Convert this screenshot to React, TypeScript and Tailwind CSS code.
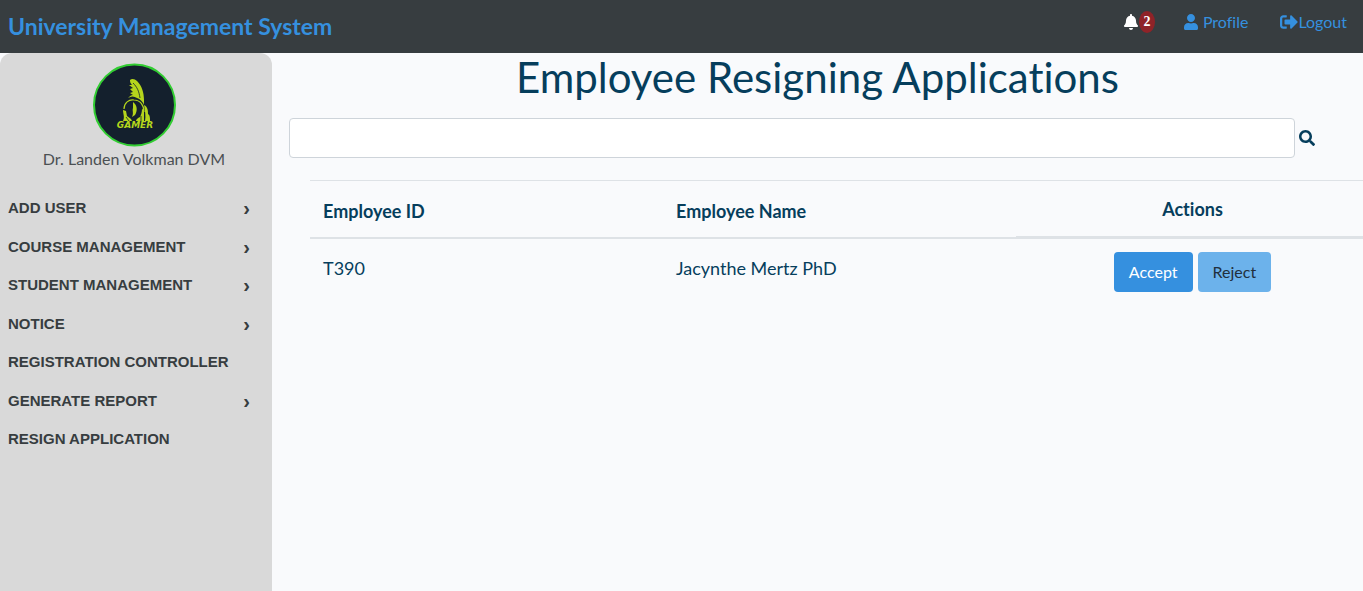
import React from "react";
import { FaBell, FaSearch, FaSignOutAlt, FaUser } from "react-icons/fa";

const menu: { label: string; expandable: boolean }[] = [
  { label: "ADD USER", expandable: true },
  { label: "COURSE MANAGEMENT", expandable: true },
  { label: "STUDENT MANAGEMENT", expandable: true },
  { label: "NOTICE", expandable: true },
  { label: "REGISTRATION CONTROLLER", expandable: false },
  { label: "GENERATE REPORT", expandable: true },
  { label: "RESIGN APPLICATION", expandable: false },
];

const employees = [{ id: "T390", name: "Jacynthe Mertz PhD" }];

function Avatar() {
  return (
    <svg
      viewBox="0 0 84 84"
      role="img"
      aria-label="Gamer avatar"
      className="size-[84px]"
    >
      <circle cx="42.5" cy="42" r="40.5" fill="#14202d" stroke="#32cd32" strokeWidth="2" />
      {/* hood */}
      <path
        d="M38 17c2-2 5-1 7 1 5 5 7 12 7 19v5c-1-3-4-6-7-7-3-2-6-2-9 0 2-2 3-3 5-3l-3-2 3-1-3-3 3-1-4-3h3c-2-2-2-4-2-5z"
        fill="#b5d51c"
      />
      <path d="M41 20c4 4 6 8 7 15" fill="none" stroke="#14202d" strokeWidth="0.8" />
      {/* head outline */}
      <path d="M32 46c0-6 5-10 10-9 6 0 10 5 10 12" fill="none" stroke="#b5d51c" strokeWidth="1.2" />
      <path d="M41 39c4 3 5 8 2 13l-3 2c2-4 0-6 1-9z" fill="#b5d51c" />
      {/* shoulders and hands */}
      <path d="M52 42c4 2 4 6 4 9 2 1 2 4 2 7h-5c1-5 0-10-1-16z" fill="#b5d51c" />
      <path
        d="M31 47l3 1 1 5 4 3 1 2h-9c2-4 0-7 0-11zM50 46l2 1v11h-8c0-2 2-3 4-4 1-2 2-5 2-8z"
        fill="#b5d51c"
      />
      <path d="M34 54l3 4M49 53v5" fill="none" stroke="#14202d" strokeWidth="0.8" />
      <text
        x="43"
        y="65"
        textAnchor="middle"
        className="text-[9px] font-bold italic"
        fontFamily="DejaVu Sans, sans-serif"
        fill="#b5d51c"
      >
        GAMER
      </text>
    </svg>
  );
}

export default function App() {
  return (
    <div className="flex min-h-screen flex-col overflow-hidden bg-[#f9fafc] font-['Lato','Open_Sans',sans-serif] text-[#063e5c] [font-variant-ligatures:none]">
      <header className="flex h-[53px] items-center justify-between bg-[#373d40] pr-4 pl-2 text-[#3590df]">
        <a href="#home" className="text-[23px] font-bold">
          University Management System
        </a>
        <nav className="flex items-center pb-2.5 text-base">
          <a href="#notifications" aria-label="Notifications" className="flex items-center text-white">
            <FaBell className="size-4" />
            <span className="flex h-[22px] w-4 items-center justify-center rounded-[50%] bg-[#8f2328] font-['Liberation_Serif',serif] text-sm font-bold">
              2
            </span>
          </a>
          <a href="#profile" className="ml-7 flex items-center gap-1">
            <FaUser className="size-4" />
            Profile
          </a>
          <a href="#logout" className="ml-8 flex items-center">
            <FaSignOutAlt className="size-[18px]" />
            Logout
          </a>
        </nav>
      </header>

      <div className="flex flex-1">
        <aside className="w-[272px] shrink-0 rounded-t-xl bg-[#d9d9d9] text-[#373d40]">
          <div className="flex flex-col items-center pt-2.5 pr-1">
            <Avatar />
            <p className="text-base text-[#4b5053]">Dr. Landen Volkman DVM</p>
          </div>
          <ul className="mt-[18px] grid h-[270px] grid-rows-7 font-['Liberation_Sans',Arial,sans-serif] text-[15px] font-bold">
            {menu.map((item) => (
              <li key={item.label}>
                <button
                  type="button"
                  className="flex h-full w-full items-center justify-between pr-[22px] pl-2 text-left"
                >
                  {item.label}
                  {item.expandable && <span className="text-xl leading-none">›</span>}
                </button>
              </li>
            ))}
          </ul>
        </aside>

        <main className="min-w-0 flex-1">
          <h1 className="text-center text-[42px] leading-12">Employee Resigning Applications</h1>
          <form className="mt-[17px] flex items-center gap-1 pr-12 pl-[17px]">
            <input
              type="search"
              aria-label="Search applications"
              className="h-10 min-w-0 flex-1 rounded border border-[#ced4da] bg-white px-3 text-base"
            />
            <button type="button" aria-label="Search">
              <FaSearch className="size-4" />
            </button>
          </form>

          <div className="-mr-1.5 mt-[22px] pl-[38px]">
            <table className="w-full table-fixed border-separate border-spacing-0 text-left text-lg">
              <thead>
                <tr>
                  <th className="h-[59px] border-t border-b-2 border-[#dee2e6] px-[13px] pt-1">Employee ID</th>
                  <th className="border-t border-b-2 border-[#dee2e6] px-[13px] pt-1">Employee Name</th>
                  <th className="border-t border-b-3 border-[#dee2e6] px-[13px] text-center">Actions</th>
                </tr>
              </thead>
              <tbody>
                {employees.map((employee) => (
                  <tr key={employee.id} className="align-top">
                    <td className="px-[13px] pt-[15px]">{employee.id}</td>
                    <td className="px-[13px] pt-[15px]">{employee.name}</td>
                    <td className="px-[13px] pt-[13px]">
                      <div className="flex justify-center gap-[5px] text-base">
                        <button type="button" className="h-10 rounded bg-[#3590df] px-[15px] text-white">
                          Accept
                        </button>
                        <button type="button" className="h-10 rounded bg-[#6cb2eb] px-[15px] text-[#212f3d]">
                          Reject
                        </button>
                      </div>
                    </td>
                  </tr>
                ))}
              </tbody>
            </table>
          </div>
        </main>
      </div>
    </div>
  );
}
